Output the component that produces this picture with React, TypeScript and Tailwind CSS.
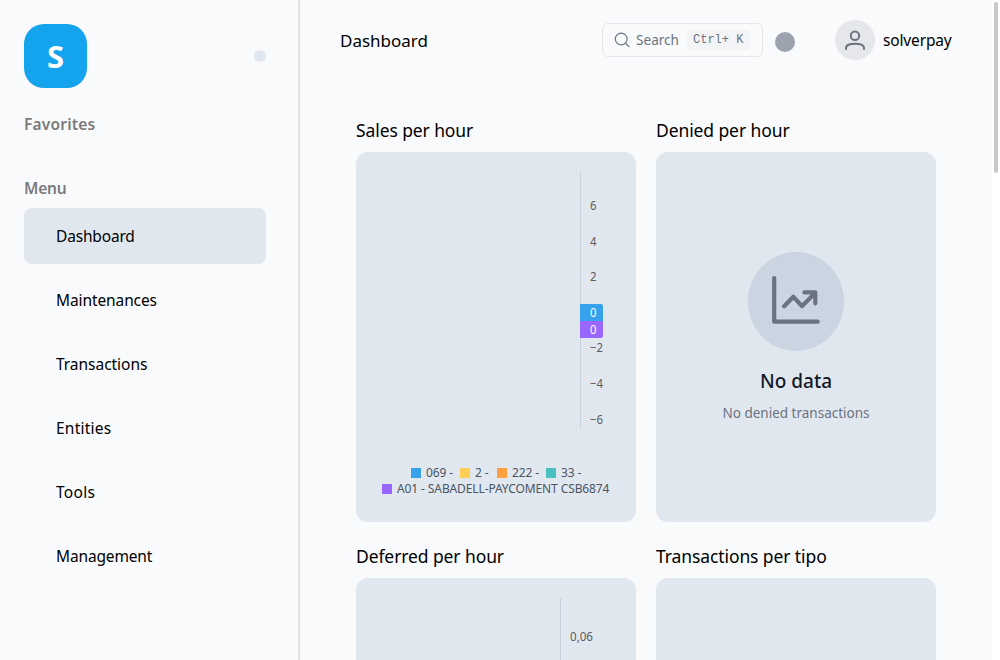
import React from "react";

const menu = [
  { label: "Dashboard", cls: "tracking-[-0.17px]" },
  { label: "Maintenances", cls: "tracking-[-0.1px]" },
  { label: "Transactions", cls: "tracking-[-0.03px]" },
  { label: "Entities", cls: "tracking-[0.22px]" },
  { label: "Tools", cls: "tracking-[0.3px]" },
  { label: "Management", cls: "tracking-[-0.15px]" },
];

function Sidebar() {
  return (
    <aside className="h-full w-[300px] shrink-0 border-r-2 border-[#e0e1e4] pl-6 pr-8 pt-6">
      <div className="flex items-center justify-between">
        <div className="flex h-16 w-[63px] items-center justify-center rounded-[20px] bg-[#14a4ee] text-[31px] font-bold leading-none text-white">
          S
        </div>
        <div className="h-3 w-3 rounded-full bg-[#e1e7ef]" />
      </div>
      <h2 className="mt-6 text-[15.5px] font-semibold leading-6 tracking-[0.2px] text-[#7b7b7b]">Favorites</h2>
      <h2 className="mt-10 text-[15.5px] font-semibold leading-6 tracking-[-0.2px] text-[#7b7b7b]">Menu</h2>
      <nav className="mt-2 flex flex-col gap-2">
        {menu.map((m, i) => (
          <a key={m.label} className={`flex h-14 items-center rounded-lg pl-8 text-[15.5px] leading-6 ${m.cls} ${i === 0 ? "bg-[#e1e7ef]" : ""}`}>
            {m.label}
          </a>
        ))}
      </nav>
    </aside>
  );
}

function Header() {
  return (
    <header className="flex h-20 items-center pl-10 pr-10">
      <h1 className="pt-[2px] text-[17px] leading-6">Dashboard</h1>
      <button className="ml-auto flex h-[34px] w-[161px] items-center rounded-md border border-[#e5e7eb] pl-[11px] text-[13.6px] text-[#6b7280]">
        <svg width="16" height="16" viewBox="0 0 16 16" fill="none" stroke="currentColor" strokeWidth="1.2" strokeLinecap="round">
          <circle cx="7.2" cy="7" r="5.9" />
          <path d="M11.5 11.3 15 14.6" />
        </svg>
        <span className="ml-[6px] w-[44px] whitespace-nowrap text-left">Search</span>
        <kbd className="ml-[7px] flex h-5 w-[63px] items-center whitespace-pre rounded bg-[#f3f4f6] pl-[6px] font-['Liberation_Mono',monospace] text-[12px]">Ctrl+ K</kbd>
      </button>
      <div className="ml-3 mt-1 h-5 w-5 rounded-full bg-[#9ca3af]" />
      <div className="ml-10 flex h-10 w-10 items-center justify-center rounded-full bg-[#e5e7eb] text-[#6b7280]">
        <svg width="24" height="24" viewBox="0 0 24 24" fill="none" stroke="currentColor" strokeWidth="2" strokeLinecap="round">
          <circle cx="12" cy="7.7" r="4.2" />
          <path d="M3 21v-1c0-3 3.500-4.300 9-4.300s9 1.300 9 4.300v1" />
        </svg>
      </div>
      <span className="ml-2 w-[69px] whitespace-nowrap text-[15.5px] leading-6 tracking-[-0.15px]">solverpay</span>
    </header>
  );
}

function Panel({ title, children }: { title: string; children?: React.ReactNode }) {
  return (
    <section>
      <h3 className="flex h-[52px] items-center whitespace-nowrap pt-[9px] text-[17.5px] tracking-[-0.1px]">{title}</h3>
      <div className="h-[370px] rounded-xl bg-[#e1e7ef]">{children}</div>
    </section>
  );
}

const ticks: [string, number][] = [["6", 58], ["4", 94], ["2", 129], ["−2", 200], ["−4", 236], ["−6", 272]];

function SalesChart() {
  return (
    <div>
      <svg className="block" width="280" height="313" viewBox="0 0 280 313" fontSize="12" fill="#5c5c5e">
        <path d="M224.500 20V276" stroke="#cacfd9" />
        {ticks.map(([t, y]) => (
          <text key={t} x="234" y={y} textLength={t.length > 1 ? 13 : 6.5} lengthAdjust="spacingAndGlyphs">{t}</text>
        ))}
        <path d="M224 152h21a2 2 0 0 1 2 2v15h-23z" fill="#36a2eb" />
        <path d="M224 169h23v15a2 2 0 0 1-2 2h-21z" fill="#9966ff" />
        <text x="234" y="165" fill="#fff" textLength="6.500" lengthAdjust="spacingAndGlyphs">0</text>
        <text x="234" y="182" fill="#fff" textLength="6.500" lengthAdjust="spacingAndGlyphs">0</text>
      </svg>
      <div className="text-[12px] leading-4 text-[#4b5563]">
        <div className="flex pl-[55px]">
          <Legend color="bg-[#36a2eb]" width="w-[49px]" label="069 -" />
          <Legend color="bg-[#ffce56]" width="w-[37px]" label="2 -" />
          <Legend color="bg-[#ff9f40]" width="w-[49px]" label="222 -" />
          <Legend color="bg-[#4bc0c0]" width="w-[40px]" label="33 -" />
        </div>
        <div className="flex pl-[26px]">
          <Legend color="bg-[#9966ff]" width="w-[230px]" label="A01 - SABADELL-PAYCOMENT CSB6874" />
        </div>
      </div>
    </div>
  );
}

function Legend({ color, width, label }: { color: string; width: string; label: string }) {
  return (
    <span className={`flex items-center gap-[5px] whitespace-nowrap tracking-[-0.11px] ${width}`}>
      <i className={`h-[10px] w-[10px] shrink-0 ${color}`} />
      {label}
    </span>
  );
}

function NoData() {
  return (
    <div className="flex h-full flex-col items-center pt-[100px]">
      <div className="flex h-[99px] w-24 items-center justify-center rounded-[50%] bg-[#cbd5e1] text-[#6b7280]">
        <svg width="64" height="67" viewBox="0 0 64 67" fill="none" stroke="currentColor" strokeWidth="4.200" strokeLinecap="round" strokeLinejoin="round">
          <path d="M10.200 10.200V53.700H53.700" />
          <path d="M20.100 38.200 29.400 28.800 38 38.200 51.300 24.600M40.400 24.400H51.300V35.300" />
        </svg>
      </div>
      <h4 className="mt-4 text-[19px] font-medium leading-7 text-[#111827]">No data</h4>
      <p className="mt-2 text-[13.5px] leading-5 text-[#6b7280]">No denied transactions</p>
    </div>
  );
}

export default function App() {
  return (
    <div className="flex h-[660px] w-[1000px] overflow-hidden bg-[#f9fafc] font-['Noto_Sans',sans-serif] text-black">
      <Sidebar />
      <main className="h-full w-[692px] shrink-0 overflow-hidden">
        <Header />
        <div className="mt-5 grid grid-cols-[280px_280px] gap-x-5 gap-y-1 pl-14">
          <Panel title="Sales per hour"><SalesChart /></Panel>
          <Panel title="Denied per hour"><NoData /></Panel>
          <Panel title="Deferred per hour">
            <svg className="block" width="280" height="370" viewBox="0 0 280 370" fontSize="12" fill="#5c5c5e">
              <path d="M204.500 20V276" stroke="#cacfd9" />
              <text x="214" y="63" textLength="23" lengthAdjust="spacingAndGlyphs">0,06</text>
            </svg>
          </Panel>
          <Panel title="Transactions per tipo" />
        </div>
      </main>
      <div className="h-full w-2 shrink-0 bg-white pl-[2px] pt-[2px]">
        <div className="h-[171px] w-1 rounded-full bg-[#c8c8c8]" />
      </div>
    </div>
  );
}
